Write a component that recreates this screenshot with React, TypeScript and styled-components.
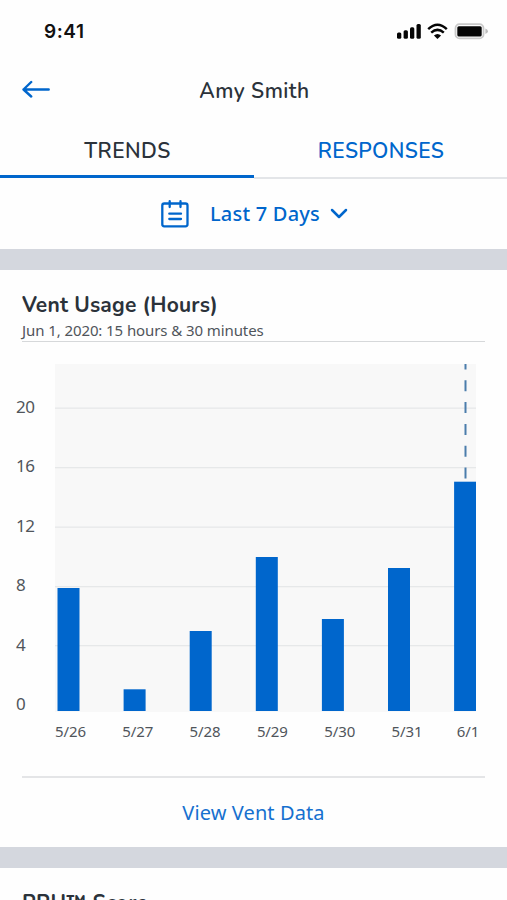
import React from 'react';
import styled, { createGlobalStyle } from 'styled-components';

const blue = '#0066cc';
const sans = `'Noto Sans', 'Open Sans', sans-serif`;
const heading = `Nunito, Lato, 'Open Sans', sans-serif`;

const Global = createGlobalStyle`
  * { box-sizing: border-box; }
  body { margin: 0; background: #fff; font-family: ${sans}; color: #2b323a; }
  button { border: 0; padding: 0; background: none; font: inherit; color: inherit; }
  svg { display: block; flex: none; }
`;

const Screen = styled.main`
  width: 507px;
  height: 900px;
  overflow: hidden;
  display: flex;
  flex-direction: column;
  background: #fefefe;
  white-space: nowrap;
`;

const StatusBar = styled.header`
  flex: none;
  height: 60px;
  padding: 1px 19px 0 44px;
  display: flex;
  justify-content: space-between;
  align-items: center;
`;

const Clock = styled.span`
  font: 600 19px/24px Inter, sans-serif;
  letter-spacing: 0.55px;
  padding-top: 2px;
  color: #111;
`;

const NavBar = styled.nav`
  flex: none;
  height: 60px;
  padding: 0 22px;
  display: grid;
  grid-template-columns: 28px 1fr 28px;
  align-items: center;
`;

const PageTitle = styled.h1`
  margin: 0;
  text-align: center;
  font: 650 21px/28px ${heading};
  letter-spacing: 0.45px;
  padding: 1px 0 0 2px;
`;

const Tabs = styled.div`
  flex: none;
  height: 59px;
  display: grid;
  grid-template-columns: 254px 253px;
`;

const Tab = styled.button<{ $active?: boolean }>`
  display: flex;
  align-items: center;
  justify-content: center;
  border-bottom: ${p => (p.$active ? `3px solid ${blue}` : '2px solid #e3e5e8')};
  margin-bottom: ${p => (p.$active ? 1 : 0)}px;
  padding-top: ${p => (p.$active ? 6 : 4)}px;
  padding-left: 1px;
  font: 650 21px/28px ${heading};
  letter-spacing: ${p => (p.$active ? 0.45 : 0.4)}px;
  color: ${p => (p.$active ? '#2b323a' : blue)};
`;

const RangePicker = styled.button`
  flex: none;
  height: 70px;
  padding-left: 2px;
  display: flex;
  justify-content: center;
  align-items: center;
  color: ${blue};
`;

const RangeLabel = styled.span`
  margin: 0 10px 0 21px;
  font: 500 20px/28px ${sans};
  letter-spacing: 0.22px;
`;

const Divider = styled.div`
  flex: none;
  height: 21px;
  background: #d4d7de;
`;

const Card = styled.section`
  flex: none;
  padding: 20px 22px 0;
`;

const CardTitle = styled.h2`
  margin: 0;
  font: 700 21px/30px ${heading};
  letter-spacing: 0.22px;
`;

const Summary = styled.p`
  margin: 0;
  height: 22px;
  border-bottom: 1px solid #d6d8da;
  font: 400 15px/20px ${sans};
  letter-spacing: -0.09px;
  color: #50555b;
`;

const Chart = styled.div`
  margin: 22px -22px 0;
  padding-left: 15px;
  display: grid;
  grid-template-columns: 40px 421px;
  grid-template-rows: 348px 40px;
`;

const YAxis = styled.div`
  padding: 29px 0 0 1px;
  display: flex;
  flex-direction: column;
  gap: 31.4px;
  font-size: 17px;
  line-height: 28px;
  letter-spacing: -0.4px;
  color: #50555b;
`;

const XAxis = styled.div`
  grid-column: 2;
  display: grid;
  grid-template-columns: repeat(6, 67.3px) auto;
  font-size: 15px;
  line-height: 38px;
  letter-spacing: -0.1px;
  color: #50555b;

  span:last-child { margin-left: -2px; }
`;

const CardLink = styled.a`
  display: flex;
  justify-content: center;
  align-items: center;
  height: 71px;
  margin-top: 24px;
  border-top: 2px solid #e4e5e7;
  font-size: 20px;
  letter-spacing: 0.1px;
  color: #1670cf;
`;

const days = [
  { label: '5/26', height: 123 },
  { label: '5/27', height: 21.7 },
  { label: '5/28', height: 80 },
  { label: '5/29', height: 154 },
  { label: '5/30', height: 92 },
  { label: '5/31', height: 143 },
  { label: '6/1', height: 229.3 },
];
const ticks = [20, 16, 12, 8, 4, 0];

const StatusIcons = () => (
  <svg width="92" height="20" viewBox="396 21 92 20">
    <g fill="#050505">
      <rect x="397" y="32.4" width="4.3" height="6.3" rx="1.5" />
      <rect x="403.6" y="30.2" width="4.3" height="8.5" rx="1.5" />
      <rect x="410" y="27.3" width="4.3" height="11.4" rx="1.5" />
      <rect x="416.5" y="24" width="4.3" height="14.7" rx="1.5" />
      <path d="M437.5 39 L433.9 35.5 Q437.5 32.5 441.1 35.5 Z" />
      <rect x="457.3" y="26.2" width="24.4" height="10.2" rx="1.5" />
    </g>
    <g fill="none" stroke="#050505" strokeWidth="2.5">
      <path d="M428.2 29.1 Q437.5 20.5 446.8 29.1" />
      <path d="M431.2 32.6 Q437.5 27.1 443.8 32.6" />
    </g>
    <rect x="455.5" y="24.2" width="28" height="14.2" rx="4" fill="none" stroke="#c9c9c9" strokeWidth="1.8" />
    <path d="M485.4 28.5 Q488 29.5 488 31.3 Q488 33 485.4 34Z" fill="#bcbcbc" />
  </svg>
);

const BackArrow = () => (
  <svg width="28" height="20" viewBox="22 80 28 20" fill="none" stroke={blue} strokeWidth="2.4" strokeLinecap="round" strokeLinejoin="round">
    <path d="M48.7 89.5H23.5M31.2 82L23.5 89.5L31.2 96.5" />
  </svg>
);

const CalendarIcon = () => (
  <svg width="28" height="28" viewBox="161 200 28 28" fill="none" stroke={blue} strokeWidth="2.3" strokeLinecap="round">
    <rect x="162.3" y="203.5" width="25.2" height="22.8" rx="2" />
    <path d="M169.7 201.2V207M180.5 201.2V207M169.3 213.7H181M169.3 219H181" />
  </svg>
);

const Chevron = () => (
  <svg width="18" height="12" viewBox="0 0 18 12" fill="none" stroke={blue} strokeWidth="2.5" strokeLinecap="round" strokeLinejoin="round">
    <path d="M2 2L9 9L16 2" />
  </svg>
);

const Plot = () => (
  <svg width="421" height="348" viewBox="0 0 421 348">
    <rect width="421" height="348" fill="#f8f8f8" />
    {[44, 103.5, 163, 222.5, 281.5].map(y => (
      <rect key={y} x="0" y={y - 0.5} width="421" height="1.3" fill="#e6e8e9" />
    ))}
    <path d="M410.5 0V118" stroke="#4b7dab" strokeWidth="2" strokeDasharray="11 10.8" strokeDashoffset="5.5" />
    {days.map((d, i) => (
      <rect key={d.label} x={2.5 + i * 66.1} y={347 - d.height} width="22" height={d.height} fill={blue} />
    ))}
  </svg>
);

export default function App() {
  return (
    <Screen>
      <Global />
      <StatusBar>
        <Clock>9:41</Clock>
        <StatusIcons />
      </StatusBar>
      <NavBar>
        <button aria-label="Back"><BackArrow /></button>
        <PageTitle>Amy Smith</PageTitle>
      </NavBar>
      <Tabs>
        <Tab $active>TRENDS</Tab>
        <Tab>RESPONSES</Tab>
      </Tabs>
      <RangePicker>
        <CalendarIcon />
        <RangeLabel>Last 7 Days</RangeLabel>
        <Chevron />
      </RangePicker>
      <Divider />
      <Card>
        <CardTitle>Vent Usage (Hours)</CardTitle>
        <Summary>Jun 1, 2020: 15 hours &amp; 30 minutes</Summary>
        <Chart>
          <YAxis>{ticks.map(t => <span key={t}>{t}</span>)}</YAxis>
          <Plot />
          <XAxis>{days.map(d => <span key={d.label}>{d.label}</span>)}</XAxis>
        </Chart>
        <CardLink>View Vent Data</CardLink>
      </Card>
      <Divider />
      <Card>
        <CardTitle>PRU™ Score</CardTitle>
      </Card>
    </Screen>
  );
}
